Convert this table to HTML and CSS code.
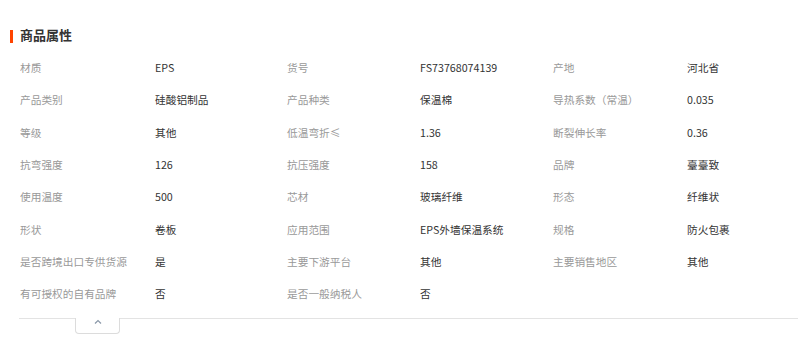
FILE: index.html
```html
<!DOCTYPE html>
<html lang="zh">
<head>
<meta charset="utf-8">
<link rel="stylesheet" href="styles.css">
</head>
<body>
<div class="section">
  <div class="title"><span class="bar"></span><span class="title-text">商品属性</span></div>
  <div class="grid">
    <div class="k">材质</div><div class="v">EPS</div>
    <div class="k">货号</div><div class="v">FS73768074139</div>
    <div class="k">产地</div><div class="v">河北省</div>

    <div class="k">产品类别</div><div class="v">硅酸铝制品</div>
    <div class="k">产品种类</div><div class="v">保温棉</div>
    <div class="k">导热系数（常温）</div><div class="v">0.035</div>

    <div class="k">等级</div><div class="v">其他</div>
    <div class="k">低温弯折≤</div><div class="v">1.36</div>
    <div class="k">断裂伸长率</div><div class="v">0.36</div>

    <div class="k">抗弯强度</div><div class="v">126</div>
    <div class="k">抗压强度</div><div class="v">158</div>
    <div class="k">品牌</div><div class="v">臺臺致</div>

    <div class="k">使用温度</div><div class="v">500</div>
    <div class="k">芯材</div><div class="v">玻璃纤维</div>
    <div class="k">形态</div><div class="v">纤维状</div>

    <div class="k">形状</div><div class="v">卷板</div>
    <div class="k">应用范围</div><div class="v">EPS外墙保温系统</div>
    <div class="k">规格</div><div class="v">防火包裹</div>

    <div class="k">是否跨境出口专供货源</div><div class="v">是</div>
    <div class="k">主要下游平台</div><div class="v">其他</div>
    <div class="k">主要销售地区</div><div class="v">其他</div>

    <div class="k">有可授权的自有品牌</div><div class="v">否</div>
    <div class="k">是否一般纳税人</div><div class="v">否</div>
    <div class="k"></div><div class="v"></div>
  </div>
  <div class="footer">
    <div class="toggle">
      <svg width="8" height="5" viewBox="0 0 8 5"><polyline points="1,4.5 4,1.5 7,4.5" fill="none" stroke="#8a98a8" stroke-width="1.2"/></svg>
    </div>
  </div>
</div>
</body>
</html>
```

FILE: styles.css
```css
html, body {
  margin: 0;
  padding: 0;
  background: #fff;
  overflow: hidden;
}
body {
  font-family: "Noto Sans CJK SC", "Microsoft YaHei", sans-serif;
  font-size: 10.7px;
  color: #333;
}
.section {
  width: 798px;
}
.title {
  display: flex;
  align-items: center;
  height: 20px;
  margin-top: 26px;
  padding-left: 10px;
  margin-bottom: 6px;
}
.bar {
  width: 3px;
  height: 13px;
  background: #ff4400;
  margin-right: 7px;
}
.title-text {
  font-size: 13px;
  font-weight: bold;
  color: #333;
  line-height: 20px;
  position: relative;
  top: -1px;
}
.grid {
  display: grid;
  grid-template-columns: 135px 132px 133px 133px 134px 111px;
  grid-auto-rows: 32.33px;
  margin-left: 20px;
  overflow: hidden;
}
.k, .v {
  display: flex;
  align-items: center;
  white-space: nowrap;
  line-height: 16px;
}
.k {
  color: #999;
}
.v {
  color: #333;
}
.footer {
  margin-top: 7px;
  margin-left: 19px;
  border-top: 1px solid #e3e3e3;
}
.toggle {
  margin-top: -1px;
  margin-left: 56px;
  width: 45px;
  height: 16px;
  background: #fff;
  border: 1px solid #dcdcdc;
  border-top: none;
  border-radius: 0 0 4px 4px;
  display: flex;
  justify-content: center;
  align-items: flex-start;
  padding-top: 1px;
  box-sizing: border-box;
}
```
